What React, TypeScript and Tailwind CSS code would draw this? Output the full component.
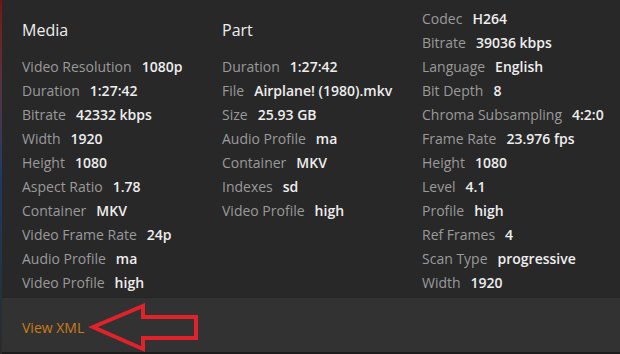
import React from "react";

type Row = [string, string];

const media: Row[] = [
  ["Video Resolution", "1080p"],
  ["Duration", "1:27:42"],
  ["Bitrate", "42332 kbps"],
  ["Width", "1920"],
  ["Height", "1080"],
  ["Aspect Ratio", "1.78"],
  ["Container", "MKV"],
  ["Video Frame Rate", "24p"],
  ["Audio Profile", "ma"],
  ["Video Profile", "high"],
];

const part: Row[] = [
  ["Duration", "1:27:42"],
  ["File", "Airplane! (1980).mkv"],
  ["Size", "25.93 GB"],
  ["Audio Profile", "ma"],
  ["Container", "MKV"],
  ["Indexes", "sd"],
  ["Video Profile", "high"],
];

const video: Row[] = [
  ["Codec", "H264"],
  ["Bitrate", "39036 kbps"],
  ["Language", "English"],
  ["Bit Depth", "8"],
  ["Chroma Subsampling", "4:2:0"],
  ["Frame Rate", "23.976 fps"],
  ["Height", "1080"],
  ["Level", "4.1"],
  ["Profile", "high"],
  ["Ref Frames", "4"],
  ["Scan Type", "progressive"],
  ["Width", "1920"],
];

function Rows({ rows }: { rows: Row[] }) {
  return (
    <div className="flex flex-col">
      {rows.map(([k, v], i) => (
        <div key={i} className="flex h-[24px] items-center whitespace-nowrap text-[14px]">
          <span className="text-[#9a9a9a]">{k}</span>
          <span className="ml-[10px] font-semibold text-[#eeeeee]">{v}</span>
        </div>
      ))}
    </div>
  );
}

function Header({ children }: { children: React.ReactNode }) {
  return (
    <div className="mt-[12px] mb-[12px] flex h-[24px] items-center text-[16px] font-medium text-[#eeeeee]">
      {children}
    </div>
  );
}

export default function App() {
  return (
    <div
      className="relative flex h-[354px] w-[620px] overflow-hidden bg-[#282828]"
      style={{ fontFamily: '"Open Sans", "Noto Sans", sans-serif' }}
    >
      <div className="h-full w-[2px] shrink-0 bg-gradient-to-b from-[#7a1010] via-[#1c3a66] to-[#2a2a2a]" />
      <div className="flex flex-1 flex-col">
        <div className="grid h-[297px] grid-cols-[200px_200px_198px] pl-[20px] pt-[6px]">
          <div>
            <Header>Media</Header>
            <Rows rows={media} />
          </div>
          <div>
            <Header>Part</Header>
            <Rows rows={part} />
          </div>
          <div>
            <Rows rows={video} />
          </div>
        </div>
        <div className="flex h-[55px] items-center border-t border-[#262626] bg-[#323232] pl-[20px] pt-[4px]">
          <span className="text-[14px] text-[#cc7b19]">View XML</span>
        </div>
        <div className="h-[2px] bg-[#1c1c1c]" />
      </div>
      <svg
        className="absolute left-0 top-0"
        width="620"
        height="354"
        viewBox="0 0 620 354"
        fill="none"
      >
        <polygon
          points="93,327 143,306 143,317 196,317 196,338 143,338 143,349"
          stroke="#e0222b"
          strokeWidth="4"
          strokeLinejoin="miter"
        />
      </svg>
    </div>
  );
}
